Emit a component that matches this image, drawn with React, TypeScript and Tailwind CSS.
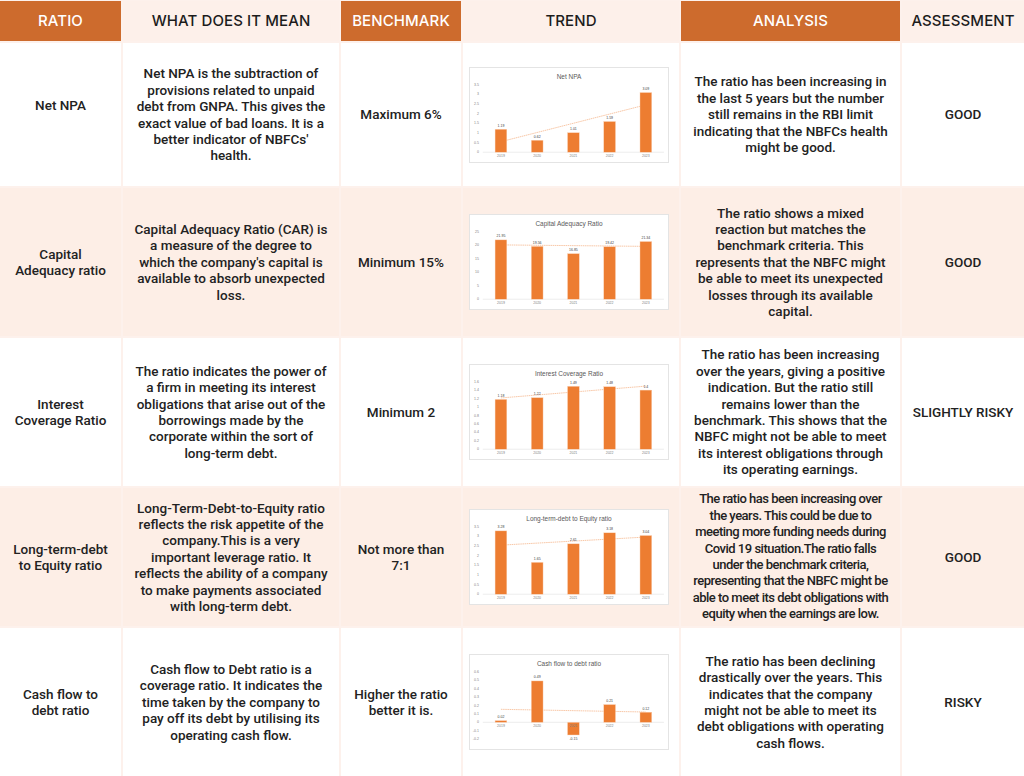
import type { ReactNode } from "react"

type ChartSpec = {
  title: string
  values: number[]
  labels: string[]
  min: number
  max: number
  step: number
}

type Row = {
  ratio: string[]
  meaning: string[]
  benchmark: string[]
  chart: ChartSpec
  analysis: string[]
  condensed?: boolean
  assessment: string
  shaded: boolean
  height: string
  ratioClass?: string
}

const years = ["2019", "2020", "2021", "2022", "2023"]

const rows: Row[] = [
  {
    ratio: ["Net NPA"],
    ratioClass: "pb-[18px]",
    meaning: [
      "Net NPA is the subtraction of",
      "provisions related to unpaid",
      "debt from GNPA. This gives the",
      "exact value of bad loans. It is a",
      "better indicator of NBFCs'",
      "health.",
    ],
    benchmark: ["Maximum 6%"],
    chart: {
      title: "Net NPA",
      values: [1.19, 0.62, 1.01, 1.59, 3.09],
      labels: ["1.19", "0.62", "1.01", "1.59", "3.09"],
      min: 0,
      max: 3.5,
      step: 0.5,
    },
    analysis: [
      "The ratio has been increasing in",
      "the last 5 years but the number",
      "still remains in the RBI limit",
      "indicating that the NBFCs health",
      "might be good.",
    ],
    assessment: "GOOD",
    shaded: false,
    height: "h-[143px]",
  },
  {
    ratio: ["Capital", "Adequacy ratio"],
    meaning: [
      "Capital Adequacy Ratio (CAR) is",
      "a measure of the degree to",
      "which the company's capital is",
      "available to absorb unexpected",
      "loss.",
    ],
    benchmark: ["Minimum 15%"],
    chart: {
      title: "Capital Adequacy Ratio",
      values: [21.95, 19.56, 16.85, 19.42, 21.34],
      labels: ["21.95", "19.56", "16.85", "19.42", "21.34"],
      min: 0,
      max: 25,
      step: 5,
    },
    analysis: [
      "The ratio shows a mixed",
      "reaction but matches the",
      "benchmark criteria. This",
      "represents that the NBFC might",
      "be able to meet its unexpected",
      "losses through its available",
      "capital.",
    ],
    assessment: "GOOD",
    shaded: true,
    height: "h-[148px]",
  },
  {
    ratio: ["Interest", "Coverage Ratio"],
    meaning: [
      "The ratio indicates the power of",
      "a firm in meeting its interest",
      "obligations that arise out of the",
      "borrowings made by the",
      "corporate within the sort of",
      "long-term debt.",
    ],
    benchmark: ["Minimum 2"],
    chart: {
      title: "Interest Coverage Ratio",
      values: [1.18, 1.22, 1.49, 1.48, 1.4],
      labels: ["1.18", "1.22", "1.49", "1.48", "1.4"],
      min: 0,
      max: 1.6,
      step: 0.2,
    },
    analysis: [
      "The ratio has been increasing",
      "over the years, giving a positive",
      "indication. But the ratio still",
      "remains lower than the",
      "benchmark. This shows that the",
      "NBFC might not be able to meet",
      "its interest obligations through",
      "its operating earnings.",
    ],
    assessment: "SLIGHTLY RISKY",
    shaded: false,
    height: "h-[148px]",
  },
  {
    ratio: ["Long-term-debt", "to Equity ratio"],
    meaning: [
      "Long-Term-Debt-to-Equity ratio",
      "reflects the risk appetite of the",
      "company.This is a very",
      "important leverage ratio. It",
      "reflects the ability of a company",
      "to make payments associated",
      "with long-term debt.",
    ],
    benchmark: ["Not more than", "7:1"],
    chart: {
      title: "Long-term-debt to Equity ratio",
      values: [3.28, 1.65, 2.61, 3.18, 3.04],
      labels: ["3.28", "1.65", "2.61", "3.18", "3.04"],
      min: 0,
      max: 3.5,
      step: 0.5,
    },
    analysis: [
      "The ratio has been increasing over",
      "the years. This could be due to",
      "meeting more funding needs during",
      "Covid 19 situation.The ratio falls",
      "under the benchmark criteria,",
      "representing that the NBFC might be",
      "able to meet its debt obligations with",
      "equity when the earnings are low.",
    ],
    condensed: true,
    assessment: "GOOD",
    shaded: true,
    height: "h-[138px]",
  },
  {
    ratio: ["Cash flow to", "debt ratio"],
    meaning: [
      "Cash flow to Debt ratio is a",
      "coverage ratio. It indicates the",
      "time taken by the company to",
      "pay off its debt by utilising its",
      "operating cash flow.",
    ],
    benchmark: ["Higher the ratio", "better it is."],
    chart: {
      title: "Cash flow to debt ratio",
      values: [0.02, 0.49, -0.15, 0.21, 0.12],
      labels: ["0.02", "0.49", "-0.15", "0.21", "0.12"],
      min: -0.2,
      max: 0.6,
      step: 0.1,
    },
    analysis: [
      "The ratio has been declining",
      "drastically over the years. This",
      "indicates that the company",
      "might not be able to meet its",
      "debt obligations with operating",
      "cash flows.",
    ],
    assessment: "RISKY",
    shaded: false,
    height: "h-[148px]",
  },
]

const headers = [
  { label: "RATIO", orange: true },
  { label: "WHAT DOES IT MEAN", orange: false },
  { label: "BENCHMARK", orange: true },
  { label: "TREND", orange: false },
  { label: "ANALYSIS", orange: true },
  { label: "ASSESSMENT", orange: false },
]

const chartFont = "Liberation Sans, Arial, sans-serif"

function TrendChart({ spec }: { spec: ChartSpec }) {
  const W = 200
  const H = 96
  const left = 12
  const right = 197
  const top = 17
  const bottom = 86
  const slot = (right - left) / spec.values.length
  const y = (v: number) =>
    bottom - ((v - spec.min) / (spec.max - spec.min)) * (bottom - top)
  const cx = (i: number) => left + slot * (i + 0.5)

  // least squares trend line, like Excel's linear trendline
  const n = spec.values.length
  const mean = spec.values.reduce((a, b) => a + b, 0) / n
  const mid = (n - 1) / 2
  let num = 0
  let den = 0
  spec.values.forEach((v, i) => {
    num += (i - mid) * (v - mean)
    den += (i - mid) * (i - mid)
  })
  const slope = num / den
  const trendAt = (i: number) => mean + slope * (i - mid)

  const ticks: number[] = []
  for (let v = spec.min; v <= spec.max + 1e-9; v += spec.step) {
    ticks.push(Math.round(v * 100) / 100)
  }
  const zero = y(0)

  return (
    <div className="h-[96px] w-[200px] border border-[#e4e4e4] bg-white">
      <svg viewBox={`0 0 ${W} ${H}`} className="block h-full w-full">
        <text
          x={W / 2}
          y={11.5}
          textAnchor="middle"
          fontSize="6.6"
          fill="#595959"
          fontFamily={chartFont}
        >
          {spec.title}
        </text>
        {ticks.map((t) => (
          <text
            key={t}
            x={8}
            y={y(t) + 1.2}
            textAnchor="end"
            fontSize="3.6"
            fill="#7f7f7f"
            fontFamily={chartFont}
          >
            {t}
          </text>
        ))}
        <line
          x1={left}
          x2={right}
          y1={zero}
          y2={zero}
          stroke="#d9d9d9"
          strokeWidth="0.5"
        />
        <line
          x1={cx(0)}
          x2={cx(n - 1)}
          y1={y(trendAt(0))}
          y2={y(trendAt(n - 1))}
          stroke="#f6b88f"
          strokeWidth="0.8"
          strokeDasharray="1.6 0.6"
        />
        {spec.values.map((v, i) => {
          const barTop = Math.min(y(v), zero)
          const barH = Math.abs(y(v) - zero)
          const labelY = v >= 0 ? y(v) - 2.5 : y(v) + 5
          return (
            <g key={i}>
              <rect
                x={cx(i) - 6}
                y={barTop}
                width={12}
                height={barH}
                fill="#ed7d31"
                stroke="#fbd7bd"
                strokeWidth="0.4"
              />
              <text
                x={cx(i)}
                y={labelY}
                textAnchor="middle"
                fontSize="3.6"
                fill="#404040"
                fontFamily={chartFont}
              >
                {spec.labels[i]}
              </text>
              <text
                x={cx(i)}
                y={zero + 5}
                textAnchor="middle"
                fontSize="3.6"
                fill="#7f7f7f"
                fontFamily={chartFont}
              >
                {years[i]}
              </text>
            </g>
          )
        })}
      </svg>
    </div>
  )
}

function Lines({ lines }: { lines: string[] }) {
  return (
    <>
      {lines.map((line, i) => (
        <span key={i} className="block whitespace-nowrap">
          {line}
        </span>
      ))}
    </>
  )
}

function Cell({
  shaded,
  className = "",
  children,
}: {
  shaded: boolean
  className?: string
  children: ReactNode
}) {
  return (
    <div
      className={`flex items-center justify-center text-center ${
        shaded ? "bg-[#fdeee6]" : "bg-white"
      } ${className}`}
    >
      {children}
    </div>
  )
}

export default function App() {
  return (
    <div className="h-[776px] w-[1024px] overflow-hidden bg-[#fdf1ec] pt-px font-['Roboto',sans-serif] text-[13.5px] leading-[16.4px] font-medium text-[#222222]">
      <div className="grid grid-cols-[121px_216px_120px_216px_219px_1fr] gap-[2px]">
        {headers.map((h) => (
          <div
            key={h.label}
            className={`flex h-[40px] items-center justify-center font-['Inter',sans-serif] text-[15px] font-medium tracking-[0.1px] ${
              h.orange ? "bg-[#cd6b2d] text-white" : "bg-[#fdf0ea] text-[#1c1c1c]"
            }`}
          >
            {h.label}
          </div>
        ))}

        {rows.map((row, i) => (
          <div key={i} className="contents">
            <Cell shaded={row.shaded} className={`${row.height} ${row.ratioClass ?? ""}`}>
              <div>
                <Lines lines={row.ratio} />
              </div>
            </Cell>
            <Cell shaded={row.shaded} className={row.height}>
              <div>
                <Lines lines={row.meaning} />
              </div>
            </Cell>
            <Cell shaded={row.shaded} className={row.height}>
              <div>
                <Lines lines={row.benchmark} />
              </div>
            </Cell>
            <Cell shaded={row.shaded} className={`${row.height} justify-start pl-[6px]`}>
              <TrendChart spec={row.chart} />
            </Cell>
            <Cell shaded={row.shaded} className={row.height}>
              <div
                className={
                  row.condensed
                    ? "text-[13px] leading-[16.4px] tracking-[-0.5px]"
                    : ""
                }
              >
                <Lines lines={row.analysis} />
              </div>
            </Cell>
            <Cell shaded={row.shaded} className={row.height}>
              <div>{row.assessment}</div>
            </Cell>
          </div>
        ))}
      </div>
    </div>
  )
}
